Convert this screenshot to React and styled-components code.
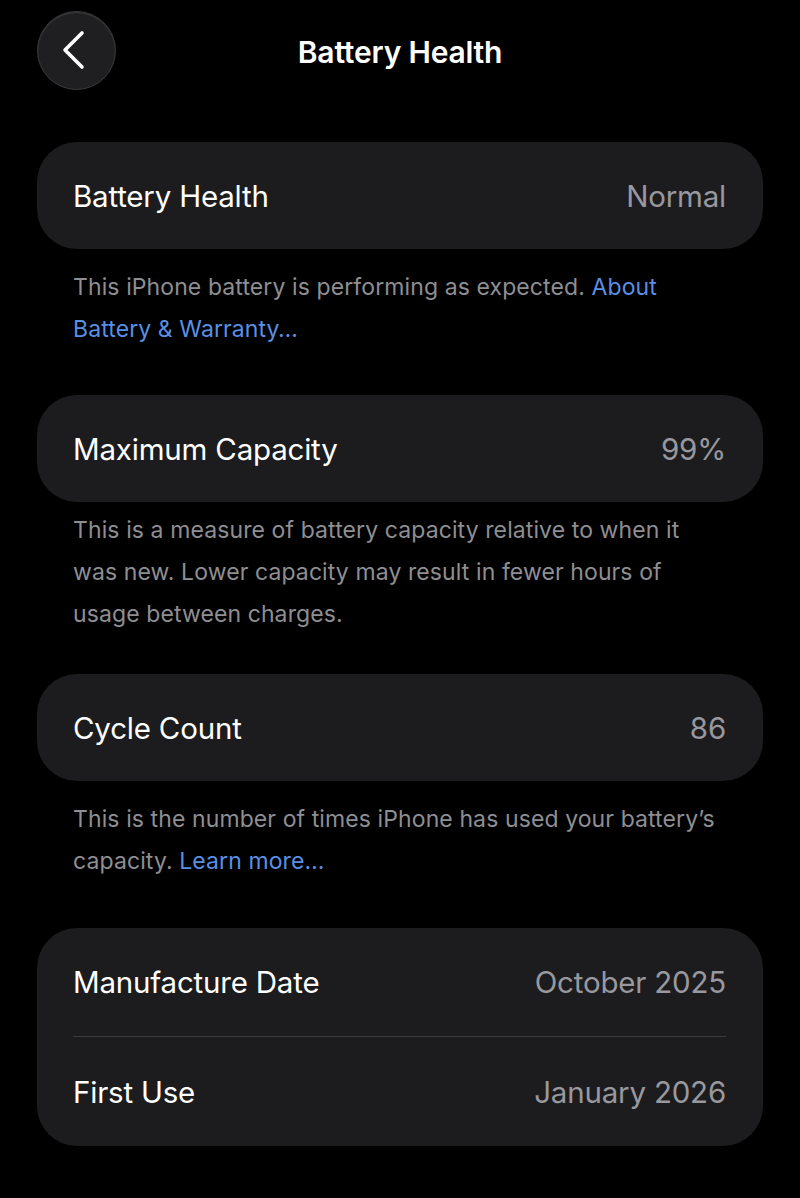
import React from "react";
import styled, { createGlobalStyle } from "styled-components";

const GlobalStyle = createGlobalStyle`
  html, body {
    margin: 0;
    padding: 0;
    background: #000;
  }
  body {
    font-family: Inter, "Noto Sans", "Liberation Sans", sans-serif;
    color: #fff;
    -webkit-font-smoothing: antialiased;
  }
`;

const Page = styled.div`
  width: 800px;
  min-height: 1198px;
  box-sizing: border-box;
  padding: 10px 37px 0;
  background: #000;
`;

const Header = styled.header`
  display: grid;
  grid-template-columns: 79px 1fr 79px;
  align-items: center;
  height: 80px;
  margin-bottom: 52px;
`;

const BackButton = styled.button`
  width: 79px;
  height: 79px;
  border-radius: 50%;
  border: 1px solid #3a3a3c;
  background: #1f1f21;
  display: flex;
  align-items: center;
  justify-content: center;
  padding: 0;
  box-shadow: inset 0 1px 1px rgba(255, 255, 255, 0.12);
  svg {
    width: 40px;
    height: 40px;
  }
`;

const Title = styled.h1`
  margin: 0;
  padding-top: 3px;
  text-align: center;
  font-size: 30px;
  font-weight: 600;
  letter-spacing: -0.2px;
`;

const Card = styled.div`
  background: #1c1c1e;
  border-radius: 40px;
  padding: 0 37px 0 36px;
`;

const Row = styled.div`
  display: flex;
  align-items: center;
  justify-content: space-between;
  height: ${(p) => p.$height || 107}px;
  & + & {
    border-top: 1px solid #3a3a3c;
  }
`;

const Label = styled.span`
  font-size: 29.5px;
  font-weight: 400;
  color: #fff;
  letter-spacing: -0.2px;
`;

const Value = styled.span`
  font-size: 29.5px;
  font-weight: 400;
  color: #98989e;
  letter-spacing: -0.2px;
`;

const Footer = styled.p`
  margin: 0;
  padding: ${(p) => p.$top}px 42px 0 36px;
  margin-bottom: ${(p) => p.$bottom}px;
  font-size: 23px;
  line-height: 42px;
  color: #8e8e93;
  letter-spacing: 0.1px;
`;

const Link = styled.a`
  color: #5a8fe6;
  text-decoration: none;
`;

const Chevron = () => (
  <svg viewBox="0 0 40 40" fill="none">
    <path
      d="M25 3 L8 20 L25 37"
      stroke="#fff"
      strokeWidth="3.6"
      strokeLinecap="round"
      strokeLinejoin="round"
    />
  </svg>
);

export default function App() {
  return (
    <Page>
      <GlobalStyle />
      <Header>
        <BackButton aria-label="Back">
          <Chevron />
        </BackButton>
        <Title>Battery Health</Title>
        <span />
      </Header>

      <Card>
        <Row>
          <Label>Battery Health</Label>
          <Value>Normal</Value>
        </Row>
      </Card>
      <Footer $top={17} $bottom={45}>
        This iPhone battery is performing as expected.{" "}
        <Link href="#">About Battery &amp; Warranty…</Link>
      </Footer>

      <Card>
        <Row>
          <Label>Maximum Capacity</Label>
          <Value>99%</Value>
        </Row>
      </Card>
      <Footer $top={7} $bottom={39}>
        This is a measure of battery capacity relative to when it was new.
        Lower capacity may result in fewer hours of usage between charges.
      </Footer>

      <Card>
        <Row>
          <Label>Cycle Count</Label>
          <Value>86</Value>
        </Row>
      </Card>
      <Footer $top={17} $bottom={46}>
        This is the number of times iPhone has used your battery’s capacity.{" "}
        <Link href="#">Learn more…</Link>
      </Footer>

      <Card>
        <Row $height={108}>
          <Label>Manufacture Date</Label>
          <Value>October 2025</Value>
        </Row>
        <Row $height={109}>
          <Label>First Use</Label>
          <Value>January 2026</Value>
        </Row>
      </Card>
    </Page>
  );
}
